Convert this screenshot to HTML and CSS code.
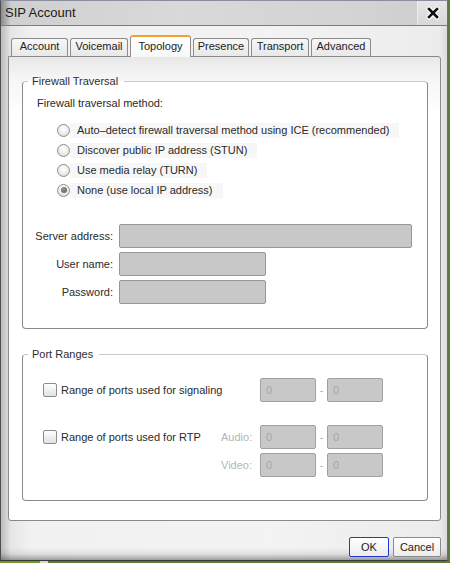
FILE: index.html
```html
<!DOCTYPE html>
<html>
<head>
<meta charset="utf-8">
<title>SIP Account</title>
<link rel="stylesheet" href="styles.css">
</head>
<body>
<div class="window">
  <div class="titlebar">
    <span class="title">SIP Account</span>
    <div class="close">
      <svg width="14" height="14" viewBox="0 0 14 14">
        <path d="M3 3 L11 11 M11 3 L3 11" stroke="#fff" stroke-width="5" stroke-linecap="round"/>
        <path d="M3 3 L11 11 M11 3 L3 11" stroke="#111" stroke-width="2.6" stroke-linecap="square"/>
      </svg>
    </div>
  </div>
  <div class="content">
    <div class="tabs">
      <div class="tab w-account">Account</div>
      <div class="tab w-voicemail">Voicemail</div>
      <div class="tab active w-topology">Topology</div>
      <div class="tab w-presence">Presence</div>
      <div class="tab w-transport">Transport</div>
      <div class="tab w-advanced">Advanced</div>
    </div>
    <div class="panel">
      <fieldset class="group">
        <legend>Firewall Traversal</legend>
        <div class="fw">
          <div class="caption">Firewall traversal method:</div>
          <div class="radios">
            <label class="radio-row"><span class="radio"></span><span>Auto–detect firewall traversal method using ICE (recommended)</span></label>
            <label class="radio-row"><span class="radio"></span><span>Discover public IP address (STUN)</span></label>
            <label class="radio-row"><span class="radio"></span><span>Use media relay (TURN)</span></label>
            <label class="radio-row"><span class="radio checked"></span><span>None (use local IP address)</span></label>
          </div>
          <div class="form">
            <span class="flabel">Server address:</span><span class="field long"></span>
            <span class="flabel">User name:</span><span class="field short"></span>
            <span class="flabel">Password:</span><span class="field short"></span>
          </div>
        </div>
      </fieldset>
      <fieldset class="group ports-box">
        <legend>Port Ranges</legend>
        <div class="ports">
          <div class="pgrid">
            <label class="check-row span2"><span class="check"></span><span>Range of ports used for signaling</span></label>
            <span class="pfield">0</span><span class="dash">-</span><span class="pfield">0</span>
          </div>
          <div class="pgrid rtp">
            <label class="check-row"><span class="check"></span><span>Range of ports used for RTP</span></label>
            <span class="sublabel">Audio:</span>
            <span class="pfield">0</span><span class="dash">-</span><span class="pfield">0</span>
            <span></span>
            <span class="sublabel">Video:</span>
            <span class="pfield">0</span><span class="dash">-</span><span class="pfield">0</span>
          </div>
        </div>
      </fieldset>
    </div>
    <div class="buttons">
      <div class="btn ok">OK</div>
      <div class="btn cancel">Cancel</div>
    </div>
  </div>
</div>
</body>
</html>
```
FILE: styles.css
```css
html, body {
  margin: 0;
  padding: 0;
}
body {
  width: 450px;
  height: 563px;
  background: linear-gradient(to right, #6b9a22 0, #6b9a22 40px, #d6d6d6 40px, #d6d6d6 48px, #5d7a3a 48px);
  font-family: "Liberation Sans", Arial, sans-serif;
  font-size: 11px;
  color: #2a2a2a;
  overflow: hidden;
}
.window {
  width: 448px;
  height: 561px;
  box-sizing: border-box;
  border-left: 1px solid #4e4e4e;
  border-right: 1px solid #5f6f98;
  border-top: 1px solid #8a8fa0;
  border-bottom: 1px solid #3a3a3a;
  display: flex;
  flex-direction: column;
  background: #efefef;
}
.titlebar {
  height: 24px;
  border-bottom: 1px solid #7c7c7c;
  display: flex;
  align-items: center;
  justify-content: space-between;
  background: linear-gradient(to right, #8c8c8c 0, #cfcfcf 10px, #d9d9d9 40%, #d3d3d3 80%, #cdcdcd 100%);
}
.title {
  font-size: 13px;
  color: #1b1b1b;
  padding-left: 4px;
  line-height: 16px;
}
.close {
  width: 29px;
  height: 24px;
  display: flex;
  align-items: center;
  justify-content: center;
  background: linear-gradient(#e6e6e6, #d8d8d8);
  border-left: 1px solid #ececec;
}
.content {
  flex: 1;
  padding: 9px 0 0 7px;
  background:
    linear-gradient(to bottom, rgba(0,0,0,0) 0, rgba(0,0,0,0) calc(100% - 12px), rgba(0,0,0,0.08) calc(100% - 6px), rgba(0,0,0,0.35) 100%),
    linear-gradient(to right, #bcbcbc 0, #e6e6e6 10px, #f1f1f1 30px, #f3f3f3 60%, #ececec calc(100% - 8px), #dcdcdc 100%);
}
.tabs {
  display: flex;
  align-items: flex-end;
  gap: 2px;
  padding-left: 3px;
  height: 22px;
  margin-bottom: -1px;
  position: relative;
  z-index: 1;
}
.tab {
  box-sizing: border-box;
  height: 18px;
  margin-bottom: 1px;
  border: 1px solid #8c8c8c;
  border-bottom: none;
  border-radius: 3px 3px 0 0;
  background: linear-gradient(#f7f7f7, #e8e8e8);
  text-align: center;
  line-height: 15px;
  padding-bottom: 2px;
  color: #222;
}
.tab.active {
  height: 22px;
  margin-bottom: 0;
  border-top: 2px solid #f3a22c;
  background: linear-gradient(#ffffff, #f8f8f8);
  line-height: 18px;
  padding-bottom: 2px;
}
.w-account { width: 57px; }
.w-voicemail { width: 58px; }
.w-topology { width: 61px; }
.w-presence { width: 56px; }
.w-transport { width: 58px; }
.w-advanced { width: 60px; }

.panel {
  width: 433px;
  height: 465px;
  box-sizing: border-box;
  border: 1px solid #8a8a8a;
  border-radius: 0 3px 3px 3px;
  background: linear-gradient(#e8e8e8, #f6f6f6 22px, #ffffff 60px);
  padding: 18px 0 0 13px;
}
.group {
  margin: 0;
  padding: 0;
  width: 406px;
  box-sizing: border-box;
  border: 1px solid #8a8a8a;
  border-top-color: #c9c9c9;
  border-radius: 4px;
  background: #fff;
  min-inline-size: 0;
}
.group legend {
  margin-left: 5px;
  padding: 0 6px 0 4px;
  line-height: 13px;
  font-size: 11px;
  color: #2e2e2e;
}
.fw {
  padding: 8px 0 24px 14px;
}
.caption {
  line-height: 14px;
  color: #2a2a2a;
}
.radios {
  margin-top: 10px;
  padding-left: 19px;
  display: flex;
  flex-direction: column;
  align-items: flex-start;
}
.radio-row {
  height: 20px;
  display: flex;
  align-items: center;
}
.radio-row > span:last-child {
  background: #f7f7f7;
  line-height: 15px;
  padding: 0 10px 0 7px;
}
.radio {
  width: 13px;
  height: 13px;
  box-sizing: border-box;
  border: 1px solid #8e8e8e;
  border-radius: 50%;
  background: radial-gradient(circle at 50% 35%, #ffffff 0, #f2f2f2 40%, #d4d4d4 100%);
  position: relative;
  margin-left: 1px;
}
.radio.checked::after {
  content: "";
  position: absolute;
  left: 2.5px;
  top: 2.5px;
  width: 6px;
  height: 6px;
  border-radius: 50%;
  background: radial-gradient(circle at 40% 35%, #9a9a9a, #505050);
}
.form {
  margin-top: 24px;
  display: grid;
  grid-template-columns: 76px auto;
  column-gap: 6px;
  row-gap: 4px;
  align-items: center;
  justify-items: start;
}
.flabel {
  justify-self: end;
  white-space: nowrap;
  color: #2a2a2a;
}
.field {
  height: 24px;
  box-sizing: border-box;
  border: 1px solid #979797;
  border-radius: 2px;
  background: #c8c8c8;
}
.field.long { width: 293px; }
.field.short { width: 147px; }

.ports-box {
  margin-top: 19px;
}
.ports {
  padding: 17px 0 23px 20px;
}
.pgrid {
  display: grid;
  grid-template-columns: 178px 39px 56px 11px 56px;
  grid-auto-rows: 24px;
  row-gap: 4px;
  align-items: center;
}
.pgrid.rtp {
  margin-top: 23px;
}
.span2 {
  grid-column: span 2;
}
.check-row {
  display: flex;
  align-items: center;
  gap: 4px;
}
.check {
  width: 14px;
  height: 14px;
  box-sizing: border-box;
  border: 1px solid #8c8c8c;
  border-radius: 2px;
  background: linear-gradient(#ffffff, #e2e2e2);
}
.sublabel {
  text-align: right;
  padding-right: 8px;
  color: #b4b4b4;
}
.pfield {
  height: 24px;
  box-sizing: border-box;
  border: 1px solid #a0a0a0;
  border-radius: 2px;
  background: #c8c8c8;
  color: #a6a6a6;
  padding-left: 5px;
  line-height: 22px;
}
.dash {
  text-align: center;
  color: #b0b0b0;
}
.buttons {
  display: flex;
  justify-content: flex-end;
  gap: 4px;
  margin-top: 16px;
  padding-right: 6px;
}
.btn {
  height: 20px;
  box-sizing: border-box;
  border: 1px solid #8a8a8a;
  border-radius: 2px;
  background: linear-gradient(#ffffff, #ececec);
  text-align: center;
  line-height: 18px;
  font-size: 11px;
  color: #222;
}
.btn.ok {
  width: 40px;
  border-color: #2136d6;
}
.btn.cancel {
  width: 48px;
}
```
